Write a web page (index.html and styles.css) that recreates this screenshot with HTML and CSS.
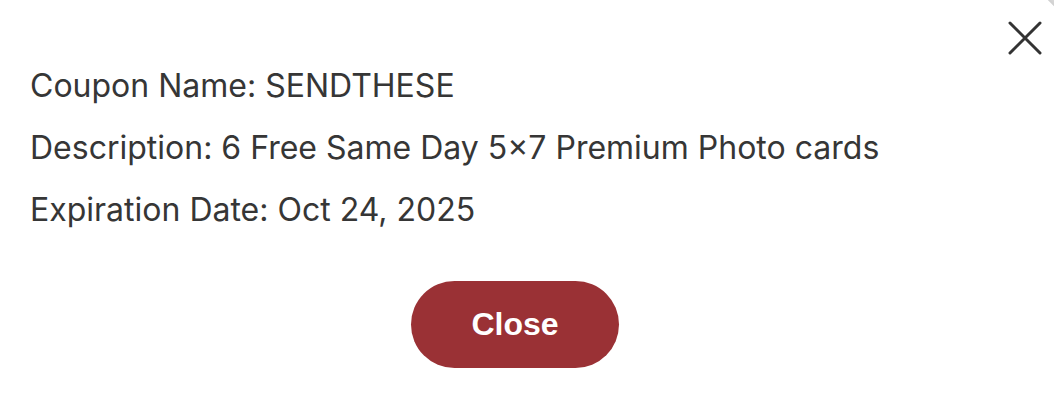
FILE: index.html
```html
<!DOCTYPE html>
<html lang="en">
<head>
  <meta charset="UTF-8" />
  <title>Coupon Details</title>
  <link rel="stylesheet" href="styles.css">
</head>
<body>

<div class="modal">
  <button class="modal-close" aria-label="Close">
    <svg width="34" height="34" viewBox="0 0 34 34">
      <path d="M2 2 L32 32 M32 2 L2 32" stroke="#333" stroke-width="3" stroke-linecap="round" fill="none"/>
    </svg>
  </button>
  <div class="corner"></div>

  <div class="coupon-info">
    <p>Coupon Name: SENDTHESE</p>
    <p>Description: 6 Free Same Day 5×7 Premium Photo cards</p>
    <p>Expiration Date: Oct 24, 2025</p>
  </div>

  <div class="actions">
    <button class="btn-close">Close</button>
  </div>
</div>

</body>
</html>
```

FILE: styles.css
```css
body {
  margin: 0;
  background: #fff;
  font-family: Inter, "Noto Sans", sans-serif;
  color: #363636;
}
.modal {
  position: relative;
  height: 412px;
  padding: 55px 54px 0 30px;
  box-sizing: border-box;
  overflow: hidden;
}
.modal-close {
  position: absolute;
  top: 21px;
  right: 12px;
  background: none;
  border: none;
  padding: 0;
  cursor: pointer;
}
.corner {
  position: absolute;
  top: -14px;
  right: -14px;
  width: 20px;
  height: 20px;
  transform: rotate(45deg);
  background: linear-gradient(to bottom, #fff 0, #bbb 100%);
  opacity: 0.7;
}
.coupon-info p {
  margin: 0;
  font-size: 32px;
  line-height: 62px;
}
.actions {
  display: flex;
  justify-content: center;
  margin-top: 40px;
}
.btn-close {
  width: 208px;
  height: 87px;
  border: none;
  border-radius: 44px;
  background: #9a3135;
  color: #fff;
  font-family: "Liberation Sans", Arial, sans-serif;
  font-weight: bold;
  font-size: 32px;
  cursor: pointer;
}
```
